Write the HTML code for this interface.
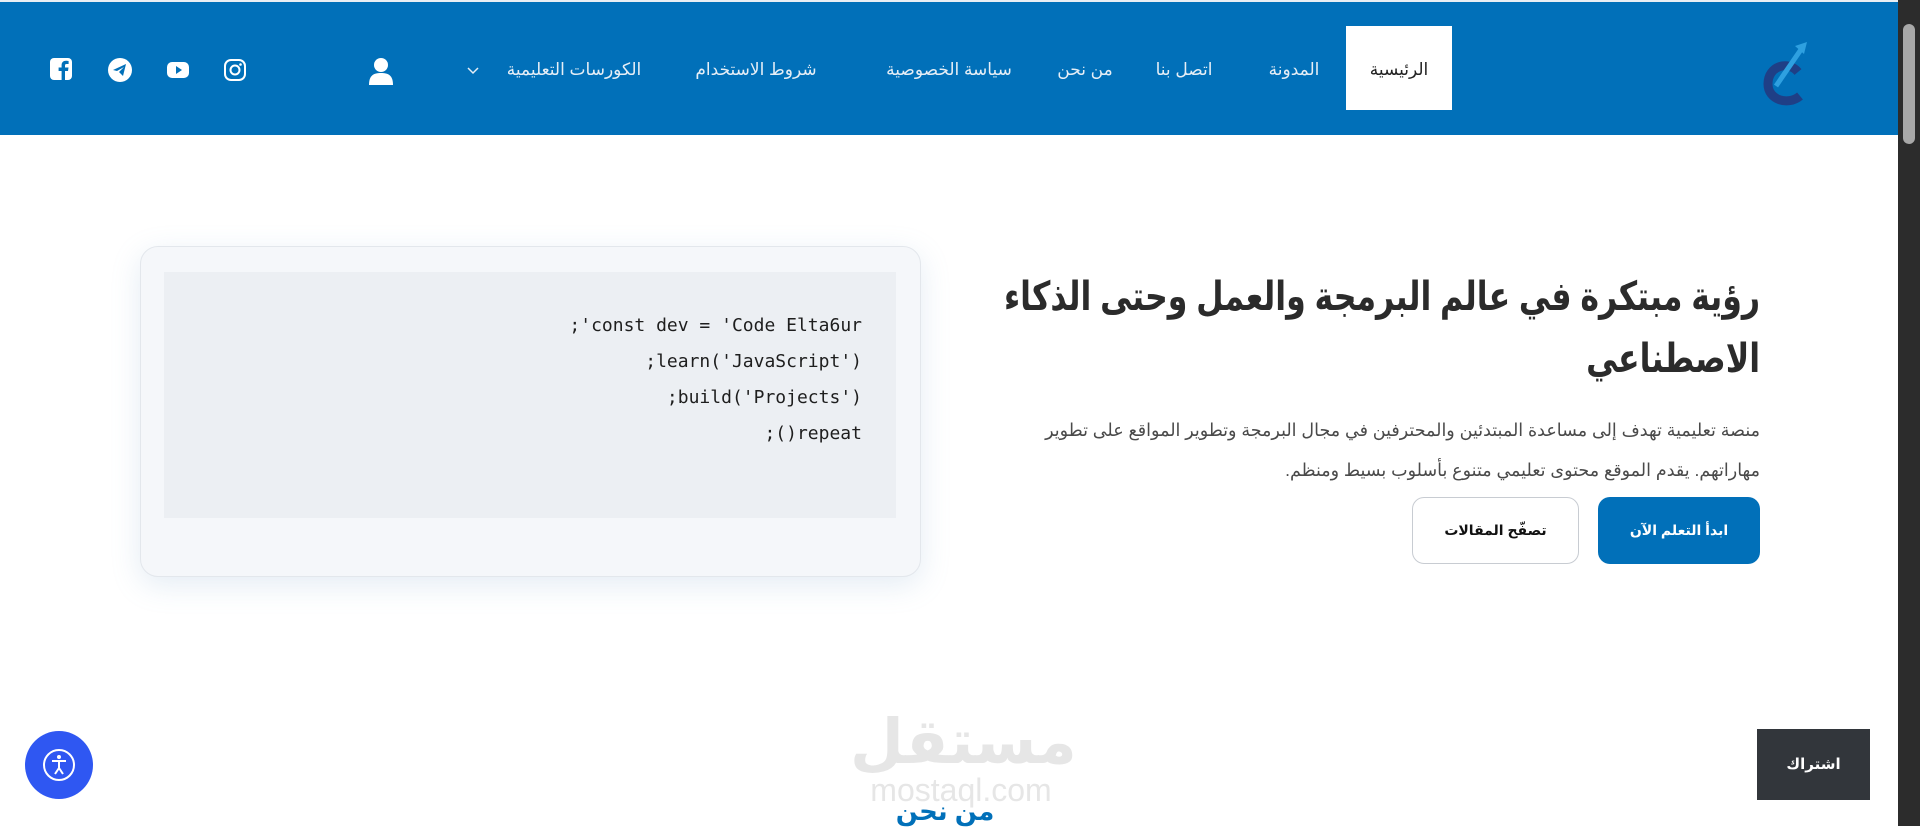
<!DOCTYPE html>
<html><head><meta charset="utf-8">
<style>
*{margin:0;padding:0;box-sizing:border-box}
body{width:1920px;height:826px;overflow:hidden;background:#fff;font-family:"Liberation Sans","DejaVu Sans",sans-serif;position:relative}
.a{position:absolute;white-space:nowrap}
nav{position:absolute;left:0;top:0;width:1898px;height:135px;background:#0170b9;border-top:2px solid #e8eef4}
.ni{position:absolute;top:58px;color:#e6eef6;font-size:17px;transform:translateX(-50%)}
.sb{position:absolute;right:0;top:0;width:22px;height:826px;background:#2c2c2c}
.sb i{position:absolute;left:5px;top:24px;width:12px;height:120px;background:#a8a8a8;border-radius:6px}
</style></head><body>
<nav>
  <div class="a" style="left:1346px;top:24px;width:106px;height:84px;background:#fff"></div>
  <div class="ni" style="left:1399px;color:#222">الرئيسية</div>
  <div class="ni" style="left:1294px">المدونة</div>
  <div class="ni" style="left:1184px">اتصل بنا</div>
  <div class="ni" style="left:1085px">من نحن</div>
  <div class="ni" style="left:949px">سياسة الخصوصية</div>
  <div class="ni" style="left:756px">شروط الاستخدام</div>
  <div class="ni" style="left:574px">الكورسات التعليمية</div>
  <svg class="a" style="left:467px;top:64px" width="12" height="10" viewBox="0 0 12 10"><path d="M1 2 L6 7 L11 2" stroke="#e6eef6" stroke-width="1.5" fill="none"/></svg>
  <svg class="a" style="left:368px;top:55px" width="26" height="28" viewBox="0 0 26 28"><circle cx="13" cy="8" r="7" fill="#fff"/><path d="M1 28 C1 18 6 16 13 16 C20 16 25 18 25 28Z" fill="#fff"/></svg>
  <svg class="a" style="left:223px;top:56px" width="24" height="24" viewBox="0 0 24 24"><rect x="2" y="2" width="20" height="20" rx="6" stroke="#fff" stroke-width="2" fill="none"/><circle cx="12" cy="12" r="4.5" stroke="#fff" stroke-width="2" fill="none"/><circle cx="17.5" cy="6.5" r="1.3" fill="#fff"/></svg>
  <svg class="a" style="left:166px;top:58px" width="24" height="20" viewBox="0 0 24 20"><rect x="1" y="2" width="22" height="16" rx="5" fill="#fff"/><path d="M10 6 L16 10 L10 14Z" fill="#0170b9"/></svg>
  <svg class="a" style="left:107px;top:55px" width="26" height="26" viewBox="0 0 26 26"><circle cx="13" cy="13" r="12" fill="#fff"/><path d="M6 13 L19 7 L16 19 L12 15 L17 10 L10 14Z" fill="#0170b9"/></svg>
  <svg class="a" style="left:49px;top:55px" width="24" height="24" viewBox="0 0 24 24"><rect x="1" y="1" width="22" height="22" rx="4" fill="#fff"/><path d="M16 23 V14 H19 L19.5 10.5 H16 V8.5 C16 7.5 16.4 7 17.5 7 H19.6 V4 C19 3.9 18 3.8 17 3.8 C14.4 3.8 12.6 5.4 12.6 8.2 V10.5 H9.6 V14 H12.6 V23Z" fill="#0170b9"/></svg>
  <svg class="a" style="left:1762px;top:36px" width="52" height="70" viewBox="0 0 52 70"><path d="M36 34 C26 22 6 28 6 46 C6 62 26 68 38 58" stroke="#1f3f86" stroke-width="9" fill="none"/><path d="M14 48 L40 10" stroke="#2ea0e0" stroke-width="5"/><path d="M33 8 L45 4 L42 16Z" fill="#2ea0e0"/></svg>
</nav>
<div class="sb"><i></i></div>

<div class="a" style="left:140px;top:246px;width:781px;height:331px;background:#f5f7fa;border:1px solid #e3e7ec;border-radius:18px;box-shadow:0 8px 30px rgba(120,160,200,.2)"></div>
<div class="a" style="left:164px;top:272px;width:732px;height:246px;background:#eceff3"></div>
<div class="a" style="left:400px;top:308px;width:462px;text-align:right;font-family:'DejaVu Sans Mono','Liberation Mono',monospace;font-size:18px;line-height:36px;color:#1e1e1e;direction:ltr;unicode-bidi:bidi-override">;'const dev = 'Code Elta6ur<br>;learn('JavaScript')<br>;build('Projects')<br>;()repeat</div>

<div class="a" style="right:160px;top:266px;font-size:40px;font-weight:bold;color:#2b2b2b;direction:rtl;text-align:right;line-height:62px;transform:scaleX(0.79);transform-origin:right top">رؤية مبتكرة في عالم البرمجة والعمل وحتى الذكاء<br>الاصطناعي</div>
<div class="a" style="right:160px;top:410px;font-size:17.5px;color:#4a4a4a;direction:rtl;text-align:right;line-height:40px">منصة تعليمية تهدف إلى مساعدة المبتدئين والمحترفين في مجال البرمجة وتطوير المواقع على تطوير<br>مهاراتهم. يقدم الموقع محتوى تعليمي متنوع بأسلوب بسيط ومنظم.</div>
<div class="a" style="left:1598px;top:497px;width:162px;height:67px;background:#0170b9;border-radius:12px;color:#fff;font-weight:bold;font-size:14px;text-align:center;line-height:67px">ابدأ التعلم الآن</div>
<div class="a" style="left:1412px;top:497px;width:167px;height:67px;background:#fff;border:1px solid #c8ccd2;border-radius:12px;color:#111;font-weight:bold;font-size:14px;text-align:center;line-height:65px">تصفّح المقالات</div>

<div class="a" style="left:850px;top:708px;width:222px;text-align:center;font-size:62px;font-weight:bold;color:#e6e6e6;line-height:70px">مستقل</div>
<div class="a" style="left:850px;top:772px;width:222px;text-align:center;font-size:32px;color:#e6e6e6">mostaql.com</div>
<div class="a" style="left:850px;top:796px;width:190px;text-align:center;font-size:26px;font-weight:bold;color:#0170b9">من نحن</div>

<div class="a" style="left:25px;top:731px;width:68px;height:68px;border-radius:50%;background:#2f57f2"></div>
<svg class="a" style="left:35px;top:741px" width="48" height="48" viewBox="0 0 48 48"><circle cx="24" cy="24" r="15" stroke="#fff" stroke-width="2" fill="none"/><circle cx="24" cy="16" r="2" fill="#fff"/><path d="M17 20 H31 M24 20 V27 L20 33 M24 27 L28 33" stroke="#fff" stroke-width="2" fill="none"/></svg>
<div class="a" style="left:1757px;top:729px;width:113px;height:71px;background:#32363b;color:#fff;font-size:15px;font-weight:bold;text-align:center;line-height:71px">اشتراك</div>
</body></html>
